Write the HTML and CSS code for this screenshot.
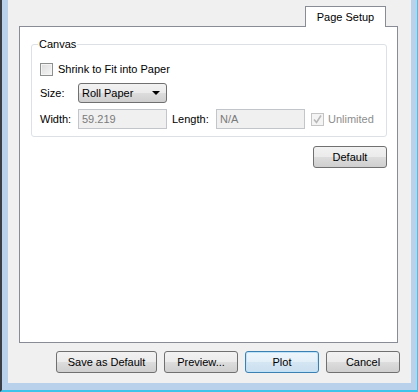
FILE: index.html
```html
<!DOCTYPE html>
<html>
<head>
    <title>Page Setup</title>
    <meta charset="UTF-8">
    <link rel="stylesheet" href="styles.css">
</head>
<body>
    <div class="frame">
        <div class="client">
            <div class="tab-strip">
                <div class="tab">Page Setup</div>
            </div>

            <div class="panel">
                <fieldset class="group">
                    <legend>Canvas</legend>

                    <label class="check-row">
                        <span class="checkbox"></span>
                        Shrink to Fit into Paper
                    </label>

                    <div class="row">
                        <span class="label">Size:</span>
                        <div class="combo">
                            <span>Roll Paper</span>
                            <span class="arrow"></span>
                        </div>
                    </div>

                    <div class="row">
                        <span class="label">Width:</span>
                        <div class="textbox">59.219</div>
                        <span class="label-len">Length:</span>
                        <div class="textbox">N/A</div>
                        <span class="checkbox checked">
                            <svg width="11" height="11" viewBox="0 0 11 11">
                                <path d="M2 5.5 L4.5 8.5 L9 1.5" fill="none" stroke="#b8b8b8" stroke-width="1.6"/>
                            </svg>
                        </span>
                        <span class="disabled-text">Unlimited</span>
                    </div>
                </fieldset>

                <div class="default-row">
                    <button class="btn">Default</button>
                </div>
            </div>

            <div class="buttons">
                <button class="btn wide">Save as Default</button>
                <button class="btn">Preview...</button>
                <button class="btn focused">Plot</button>
                <button class="btn">Cancel</button>
            </div>
        </div>
    </div>
</body>
</html>
```

FILE: styles.css
```css
body {
    margin: 0;
    font-family: "Liberation Sans", Arial, sans-serif;
    font-size: 11px;
    color: #000;
}

.frame {
    width: 403px;
    height: 383px;
    background: #b9d1ea;
    border-left: 2px solid #3b3f45;
    border-right: 1px solid #3ec3ea;
    border-bottom: 2px solid #3ec3ea;
    padding: 0 6px 7px 6px;
}

.client {
    height: 383px;
    background: #f0f0f0;
    padding: 6px 11px 0 11px;
    box-sizing: border-box;
}

.tab-strip {
    display: flex;
    justify-content: flex-end;
    padding-right: 12px;
    width: 379px;
    box-sizing: border-box;
}

.tab {
    width: 81px;
    height: 21px;
    box-sizing: border-box;
    background: #fff;
    border: 1px solid #898c95;
    border-bottom: none;
    margin-bottom: -1px;
    position: relative;
    z-index: 1;
    text-align: center;
    line-height: 20px;
}

.panel {
    width: 379px;
    height: 317px;
    box-sizing: border-box;
    background: #fff;
    border: 1px solid #898c95;
    padding: 11px 10px 0 11px;
}

.group {
    margin: 0;
    border: 1px solid #dde1e5;
    border-radius: 3px;
    padding: 9px 8px 7px 8px;
}

.group legend {
    padding: 0 1px;
    margin-left: -2px;
    line-height: 13px;
}

.check-row {
    display: flex;
    align-items: center;
    gap: 5px;
    height: 18px;
}

.checkbox {
    width: 13px;
    height: 13px;
    box-sizing: border-box;
    border: 1px solid #8e8f8f;
    background: linear-gradient(135deg, #dcdcdc, #f6f6f6);
    box-shadow: inset 0 0 0 1px #f4f4f4;
    display: inline-flex;
    align-items: center;
    justify-content: center;
}

.checkbox.checked {
    border-color: #c4c4c4;
    background: #f4f4f4;
    box-shadow: none;
    margin-left: 6px;
    margin-right: 4px;
}

.row {
    display: flex;
    align-items: center;
    height: 20px;
    margin-top: 5px;
}

.row + .row {
    margin-top: 6px;
}

.label {
    width: 38px;
}

.label-len {
    margin-left: 5px;
    width: 44px;
}

.combo {
    width: 89px;
    height: 20px;
    box-sizing: border-box;
    border: 1px solid #707070;
    border-radius: 3px;
    background: linear-gradient(#f2f2f2, #ebebeb 50%, #dddddd 50%, #cfcfcf);
    display: flex;
    align-items: center;
    justify-content: space-between;
    padding: 0 6px 0 3px;
}

.arrow {
    width: 0;
    height: 0;
    border-left: 4px solid transparent;
    border-right: 4px solid transparent;
    border-top: 4px solid #000;
}

.textbox {
    width: 89px;
    height: 20px;
    box-sizing: border-box;
    border: 1px solid #c2c6ca;
    background: #f0f0f0;
    color: #7a7a7a;
    padding-left: 3px;
    line-height: 18px;
}

.disabled-text {
    color: #8d8d8d;
}

.default-row {
    display: flex;
    justify-content: flex-end;
    margin-top: 9px;
}

.btn {
    width: 74px;
    height: 22px;
    font-family: inherit;
    font-size: 11px;
    color: #000;
    border: 1px solid #707070;
    border-radius: 3px;
    background: linear-gradient(#f2f2f2, #ebebeb 50%, #dddddd 50%, #cfcfcf);
    padding: 0;
}

.btn.wide {
    width: 101px;
}

.btn.focused {
    border-color: #3c7fb1;
    background: linear-gradient(#eef6fc, #e3eff8 50%, #d5e6f3 50%, #cadff0);
    box-shadow: inset 0 0 0 1px #bfe3f8;
}

.buttons {
    display: flex;
    justify-content: flex-end;
    gap: 7px;
    margin-top: 8px;
}
```
